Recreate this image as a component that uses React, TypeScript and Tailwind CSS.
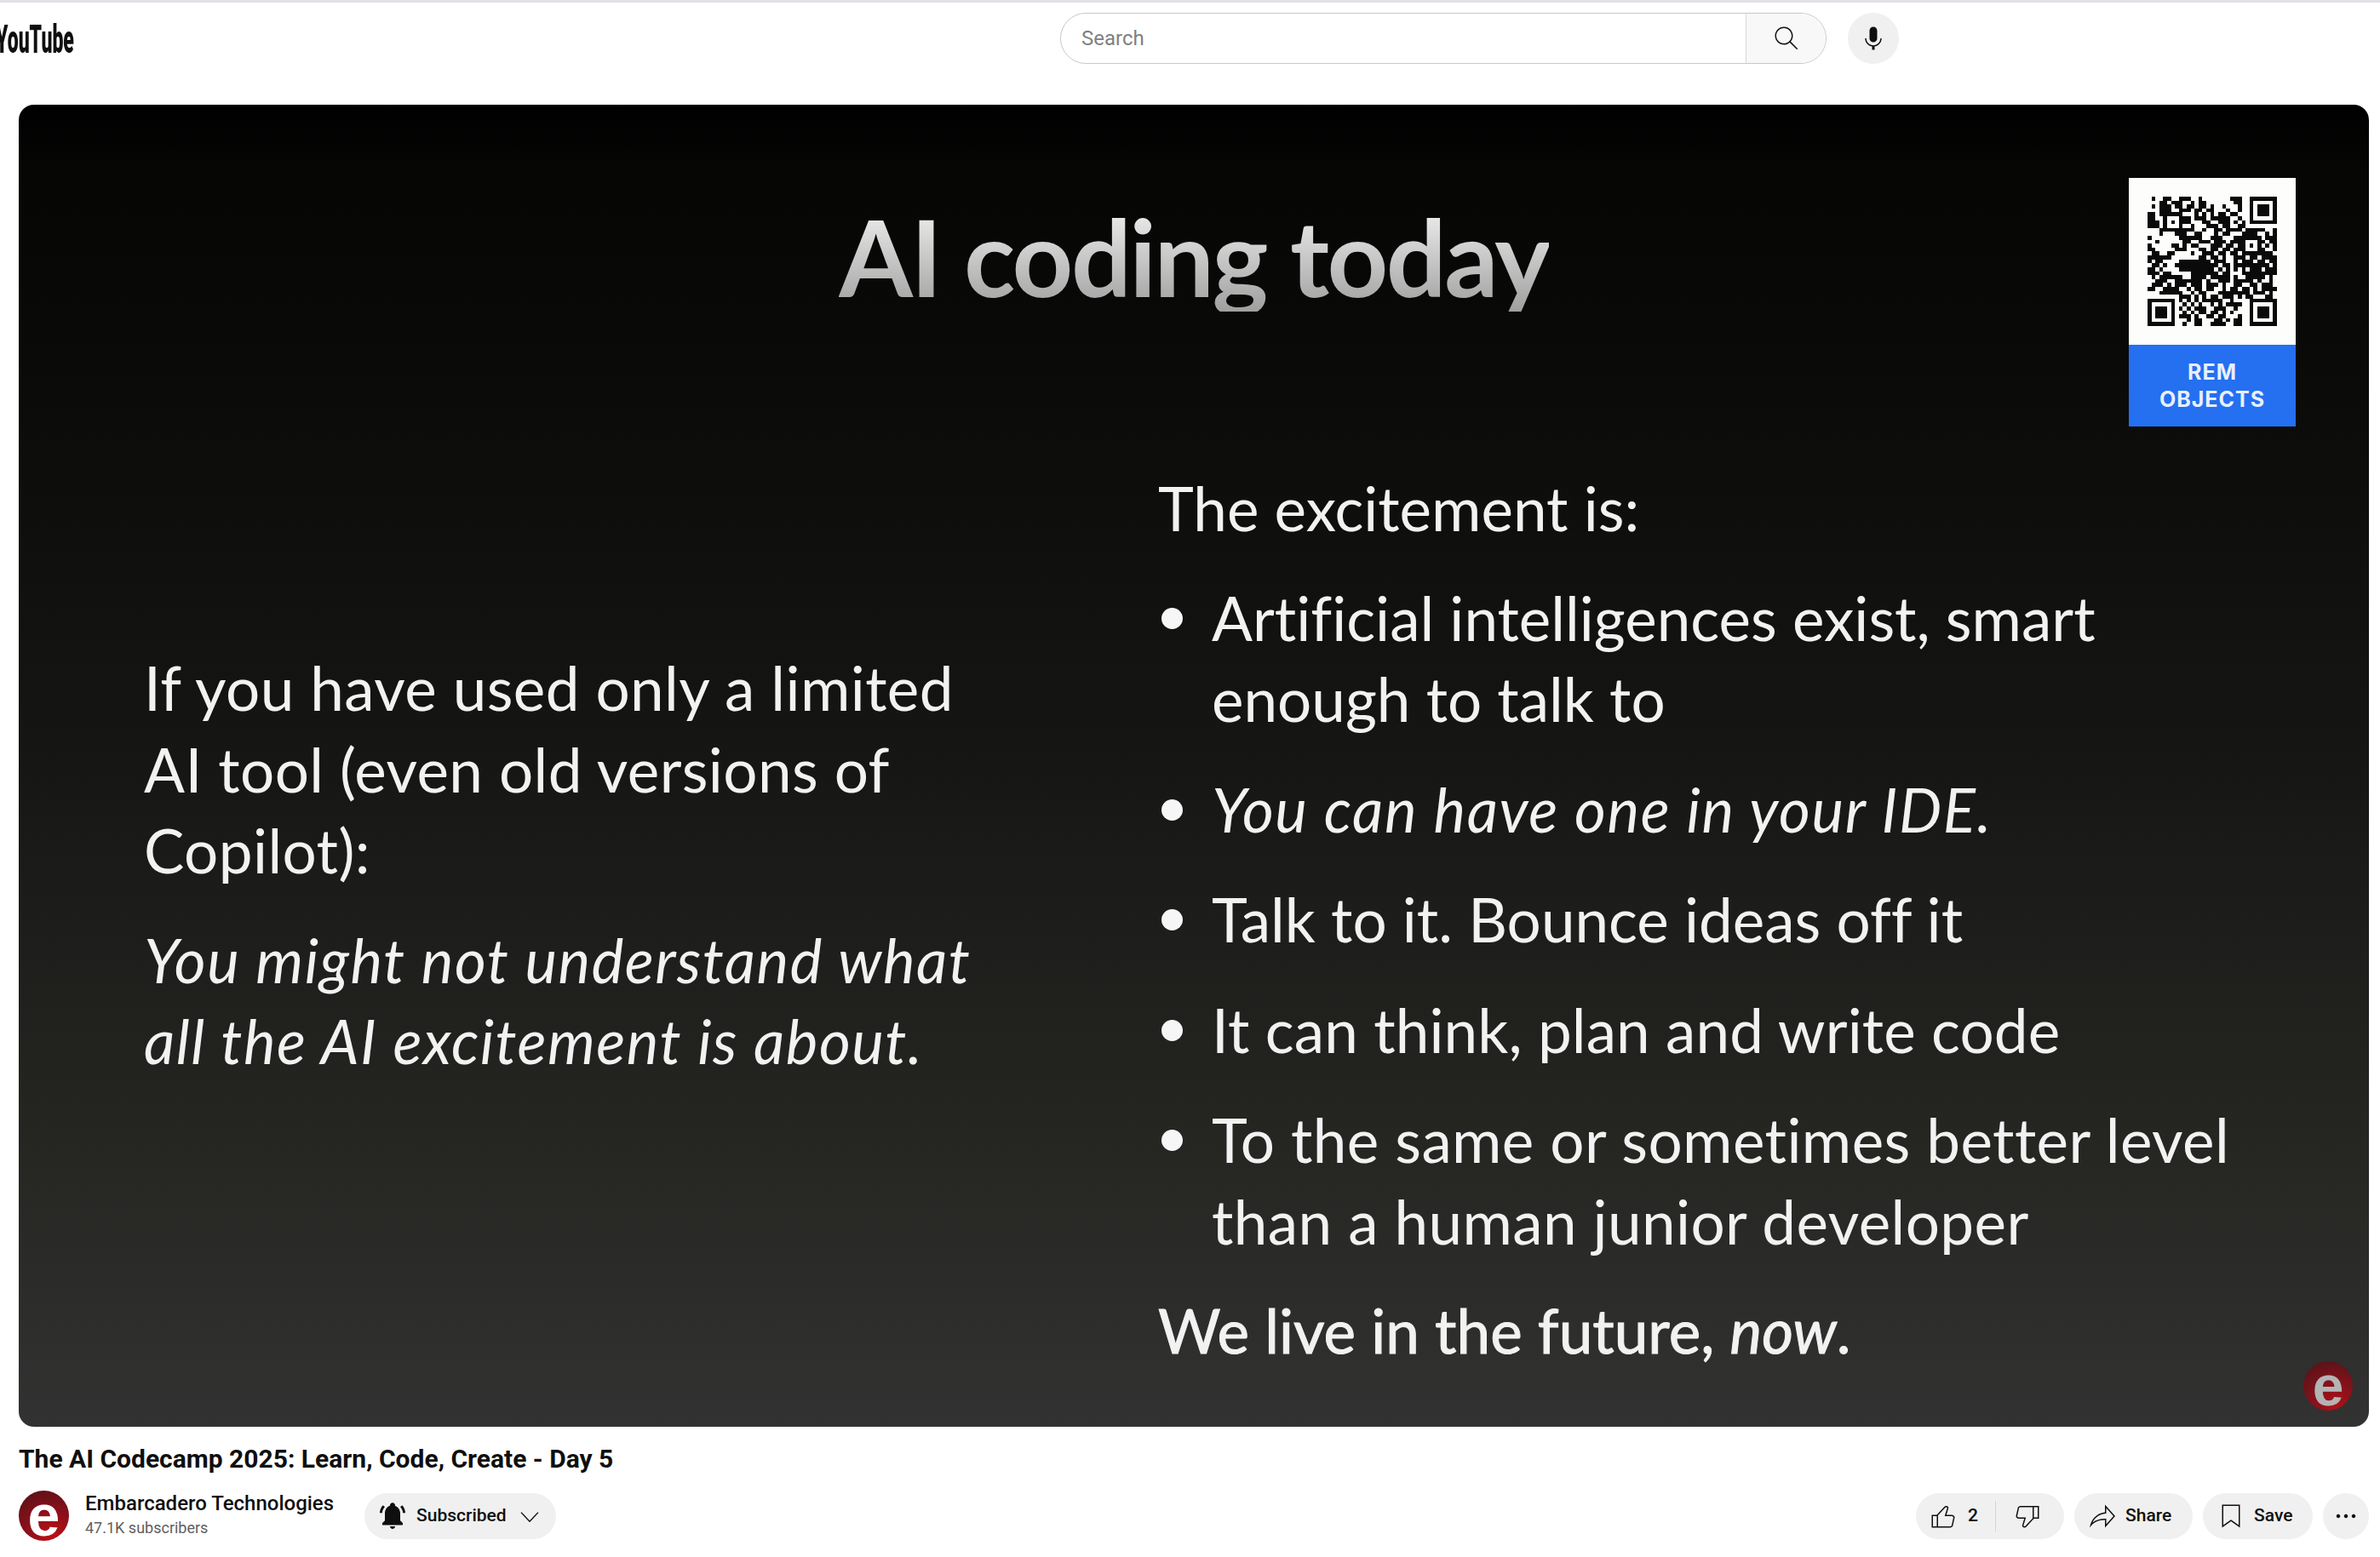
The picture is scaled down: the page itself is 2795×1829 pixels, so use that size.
const qrRows = [
  "010011001110010000000111000000000",
  "000110111001011000000011000000000",
  "010111011011011010010001000000000",
  "000111001110110110001001000000000",
  "110101111000101010110110000000000",
  "110001110110111011111001000000000",
  "111011110110001100111010100000000",
  "111001011001000111011001100000000",
  "000111100111001001101111011111001",
  "000100011100110001011000111100101",
  "100000001111110011100011100110111",
  "001000000110011101110111001011011",
  "100000110101100011101101110100101",
  "110000011100011011011011011001001",
  "011001100001001110110110110011110",
  "111111000000011011010011101101111",
  "101100001111111101110010111011011",
  "011010011111111111011011111111101",
  "110100001111111110101010101110111",
  "111011000001111111011000111111111",
  "010111111001111011111010011111010",
  "001110011111110100111011111010010",
  "011101011101110111010011001101110",
  "110011110010110110010110110101111",
  "000111111001011000111111110111010",
  "000000001110101011011101011000110",
  "000000001010101111100100000000000",
  "000000000101010010101111000000000",
  "000000001010111001110010000000000",
  "000000000101011011010100000000000",
  "000000001110100110110001000000000",
  "000000000010110001101011000000000",
  "000000000100110011110011000000000",
];

// corner squares and the small ring marks are drawn over the modules
const finders = [
  [0, 26],
  [26, 0],
  [26, 26],
];

const rings = [
  [4, 4],
  [24, 10],
];

function QrCode() {
  return (
    <svg viewBox="0 0 33 33" className="block h-[152px] w-[152px]" shapeRendering="crispEdges">
      {qrRows.map((row, y) =>
        row.split("").map((cell, x) => (cell === "1" ? <rect key={`${x}-${y}`} x={x} y={y} width="1" height="1" fill="#0a0a0a" /> : null))
      )}
      {finders.map(([fx, fy]) => (
        <g key={`${fx}-${fy}`}>
          <rect x={fx} y={fy} width="7" height="7" fill="#0a0a0a" />
          <rect x={fx + 1} y={fy + 1} width="5" height="5" fill="#fdfdfb" />
          <rect x={fx + 2} y={fy + 2} width="3" height="3" fill="#0a0a0a" />
        </g>
      ))}
      {rings.map(([rx, ry]) => (
        <g key={`${rx}-${ry}`}>
          <rect x={rx} y={ry} width="5" height="5" fill="#0a0a0a" />
          <rect x={rx + 1} y={ry + 1} width="3" height="3" fill="#fdfdfb" />
          <rect x={rx + 2} y={ry + 2} width="1" height="1" fill="#0a0a0a" />
        </g>
      ))}
    </svg>
  );
}

function Bullet({ children }: { children: React.ReactNode }) {
  return (
    <li className="flex">
      <span className="mt-[36px] ml-[4px] mr-[34px] h-[25px] w-[25px] shrink-0 rounded-full bg-[#f6f6f6]" />
      <span>{children}</span>
    </li>
  );
}

function Icon({ d, className }: { d: string; className?: string }) {
  return (
    <svg viewBox="0 0 24 24" className={className ?? "h-[36px] w-[36px]"} fill="currentColor">
      <path d={d} />
    </svg>
  );
}

function Monogram({ className, textClass }: { className: string; textClass: string }) {
  return (
    <div className={`flex items-center justify-center rounded-full bg-[radial-gradient(circle_at_65%_90%,#bd0f16,#85101a_50%,#4f1216)] ${className}`}>
      <span className={`font-['Liberation_Sans',sans-serif] font-bold ${textClass}`}>e</span>
    </div>
  );
}

export default function App() {
  return (
    <div className="h-[1829px] w-[2795px] overflow-hidden bg-white font-['Roboto',sans-serif] text-[#0f0f0f]">
      <div className="h-[3px] bg-[#e0e0e6]" />
      <header className="relative flex h-[120px] items-start">
        <div className="absolute left-[-5px] top-[18px] origin-left scale-x-[0.5] text-[46px] font-black leading-[50px]">YouTube</div>
        <div className="mt-[12px] ml-[1245px] flex h-[60px] w-[900px] rounded-full border border-[#c8c8c8] bg-white">
          <div className="flex flex-1 items-center pl-[24px] text-[24px] text-[#808080]">Search</div>
          <div className="flex w-[94px] items-center justify-center rounded-r-full border-l border-[#d8d8d8] bg-[#f8f8f8]">
            <Icon className="h-[36px] w-[36px]" d="M20.87,20.17l-5.59-5.59C16.35,13.35,17,11.75,17,10c0-3.87-3.13-7-7-7s-7,3.13-7,7s3.13,7,7,7c1.75,0,3.35-0.65,4.58-1.71 l5.59,5.59L20.87,20.17z M10,16c-3.31,0-6-2.69-6-6s2.69-6,6-6s6,2.69,6,6S13.31,16,10,16z" />
          </div>
        </div>
        <div className="mt-[12px] ml-[25px] flex h-[60px] w-[60px] items-center justify-center rounded-full bg-[#f0f0f0]">
          <Icon d="M12 3C10.34 3 9 4.37 9 6.07V11.93C9 13.63 10.34 15 12 15C13.66 15 15 13.63 15 11.93V6.07C15 4.37 13.66 3 12 3ZM18.5 12H17.5C17.5 15.03 15.03 17.5 12 17.5C8.97 17.5 6.5 15.03 6.5 12H5.5C5.5 15.24 7.89 17.93 11 18.41V21H13V18.41C16.11 17.93 18.5 15.24 18.5 12Z" />
        </div>
      </header>

      <main className="w-[2782px] pl-[22px]">
        <section className="relative h-[1553px] w-[2760px] overflow-hidden rounded-[18px] bg-[linear-gradient(to_bottom,#000000,#060605_5%,#0a0a08_20%,#121211_40%,#161614_50%,#1c1c1a_60%,#262623_80%,#323232)] font-['Lato',sans-serif] text-[71px] leading-[95.5px] text-[#f2f2f2] [font-variant-ligatures:none]">
          <h1 className="mx-auto mt-[113px] w-fit bg-gradient-to-b from-[#f4f4f4] to-[#a0a0a0] bg-clip-text text-[125px] font-bold leading-[130px] tracking-[-2.5px] text-transparent">
            AI coding today
          </h1>

          <div className="absolute right-[86px] top-[86px] w-[196px]">
            <div className="flex h-[196px] items-center justify-center bg-[#fdfdfb]">
              <QrCode />
            </div>
            <div className="flex h-[96px] flex-col items-center justify-center bg-[#2470f0] font-['Inter',sans-serif] text-[25px] font-bold leading-[32px] tracking-[1px] text-[#e8f0fc]">
              <span>REM</span>
              <span>OBJECTS</span>
            </div>
          </div>

          <div className="flex items-start">
            <div className="ml-[147px] mt-[394px] w-[1191px]">
              <p className="tracking-[0.4px]">If you have used only a limited<br />AI tool (even old versions of<br />Copilot):</p>
              <p className="mt-[33px] italic tracking-[1.5px]">You might not understand what<br />all the AI excitement is about.</p>
            </div>
            <div className="mt-[183px] w-[1300px]">
              <p>The excitement is:</p>
              <ul className="mt-[33px] flex flex-col gap-[34px]">
                <Bullet>Artificial intelligences exist, smart<br />enough to talk to</Bullet>
                <Bullet><em className="tracking-[1.6px]">You can have one in your IDE.</em></Bullet>
                <Bullet>Talk to it. Bounce ideas off it</Bullet>
                <Bullet><span className="tracking-[0.1px]">It can think, plan and write code</span></Bullet>
                <Bullet><span className="tracking-[0.4px]">To the same or sometimes better level<br />than a human junior developer</span></Bullet>
              </ul>
              <p className="mt-[33px] [-webkit-text-stroke:1px_#f2f2f2]">We live in the future, <em>now</em>.</p>
            </div>
          </div>

          <Monogram className="absolute right-[19px] bottom-[19px] h-[58px] w-[58px] opacity-90" textClass="text-[66px] leading-[58px] text-[#c4c4c4]" />
        </section>

        <h2 className="mt-[18px] text-[30px] font-bold leading-[40px]">The AI Codecamp 2025: Learn, Code, Create - Day 5</h2>

        <div className="mt-[17px] flex items-center justify-between">
          <div className="flex items-center">
            <Monogram className="h-[59px] w-[59px]" textClass="text-[68px] leading-[59px] text-white" />
            <div className="ml-[19px] -mt-[4px]">
              <div className="text-[24px] font-medium leading-[32px]">Embarcadero Technologies</div>
              <div className="mt-[1px] text-[18px] leading-[24px] text-[#606060]">47.1K subscribers</div>
            </div>
            <button className="ml-[36px] flex h-[54px] w-[225px] items-center rounded-full bg-[#f0f0f0] pl-[15px] text-[21px] font-medium">
              <svg viewBox="0 0 24 24" className="h-[36px] w-[36px]" fill="currentColor">
                <path d="M10 20h4c0 1.1-.9 2-2 2s-2-.9-2-2zm10-1v-1.65l-2-1.87V9.9c0-2.92-1.56-5.23-4-5.98v-.39c0-.73-.36-1.44-1.01-1.76C11.49 1.03 10 2.11 10 3.53v.38C7.56 4.67 6 6.97 6 9.9v5.58l-2 1.87V19h16z" />
                <path d="M4.5 3.5 6 4.8C4.7 6 4 7.6 3.9 9.5H2C2.1 7 3 5 4.5 3.500zM19.500 3.500 18 4.800c1.300 1.200 2 2.800 2.100 4.700H22C21.900 7 21 5 19.500 3.500z" />
              </svg>
              <span className="ml-[10px]">Subscribed</span>
              <svg viewBox="0 0 24 24" className="ml-[12px] h-[30px] w-[30px]" fill="none" stroke="currentColor" strokeWidth="1.1">
                <path d="M4 8.500 12 17l8-8.500" />
              </svg>
            </button>
          </div>

          <div className="flex items-center gap-[12px] text-[21px] font-medium">
            <div className="flex h-[54px] w-[174px] items-center rounded-full bg-[#f0f0f0]">
              <Icon className="ml-[14px] h-[36px] w-[36px]" d="M18.77,11h-4.23l1.52-4.94C16.38,5.03,15.54,4,14.38,4c-0.58,0-1.14,0.24-1.52,0.65L7,11H3v10h4h1h9.43 c1.06,0,1.98-0.67,2.19-1.61l1.34-6C21.23,12.15,20.18,11,18.77,11z M7,20H4v-8h3V20z M19.98,13.17l-1.34,6 C18.54,19.65,18.03,20,17.43,20H8v-8.61l5.6-6.06C13.79,5.12,14.08,5,14.38,5c0.26,0,0.5,0.11,0.63,0.3 c0.07,0.1,0.15,0.26,0.09,0.47l-1.52,4.94L13.18,12h1.35h4.23c0.41,0,0.8,0.17,1.03,0.46C19.92,12.63,20.05,12.86,19.98,13.17z" />
              <span className="ml-[11px]">2</span>
              <div className="ml-[20px] h-[36px] w-px bg-[#d4d4d4]" />
              <Icon className="ml-[19px] h-[36px] w-[36px]" d="M17,4h-1H6.57C5.5,4,4.59,4.67,4.38,5.61l-1.34,6C2.77,12.85,3.82,14,5.23,14h4.23l-1.52,4.94C7.62,19.97,8.46,21,9.62,21 c0.58,0,1.14-0.24,1.52-0.65L17,14h4V4H17z M10.4,19.67C10.21,19.88,9.92,20,9.62,20c-0.26,0-0.5-0.11-0.63-0.3 c-0.07-0.1-0.15-0.26-0.09-0.47l1.52-4.94l0.4-1.29H9.46H5.23c-0.41,0-0.8-0.17-1.03-0.46c-0.12-0.15-0.25-0.4-0.18-0.72l1.34-6 C5.46,5.35,5.97,5,6.57,5H16v8.61L10.4,19.67z M20,13h-3V5h3V13z" />
            </div>
            <button className="flex h-[54px] w-[139px] items-center rounded-full bg-[#f0f0f0] pl-[15px]">
              <Icon d="M15 5.630 20.660 12 15 18.370V14h-1c-3.960 0-7.140 1-9.750 3.090 1.840-4.070 5.110-6.400 9.890-7.100l.86-.13V5.630M14 3v6C6.220 10.130 3.110 15.330 2 21c2.780-3.970 6.440-6 12-6v6l8-9-8-9z" />
              <span className="ml-[9px]">Share</span>
            </button>
            <button className="flex h-[54px] w-[129px] items-center rounded-full bg-[#f0f0f0] pl-[15px]">
              <Icon d="M18 4v15.060l-5.420-3.870-.58-.42-.58.42L6 19.060V4h12m1-1H5v18l7-5 7 5V3z" />
              <span className="ml-[9px]">Save</span>
            </button>
            <button className="flex h-[54px] w-[54px] items-center justify-center rounded-full bg-[#f0f0f0]">
              <Icon d="M7.500 12c0 .830-.670 1.500-1.500 1.500s-1.500-.670-1.500-1.500.670-1.500 1.500-1.500 1.500.670 1.500 1.500zm4.500-1.500c-.830 0-1.500.670-1.500 1.500s.670 1.500 1.500 1.500 1.500-.670 1.500-1.500-.670-1.500-1.500-1.500zm6 0c-.830 0-1.500.670-1.500 1.500s.670 1.500 1.500 1.500 1.500-.670 1.500-1.500-.670-1.500-1.500-1.500z" />
            </button>
          </div>
        </div>
      </main>
    </div>
  );
}
